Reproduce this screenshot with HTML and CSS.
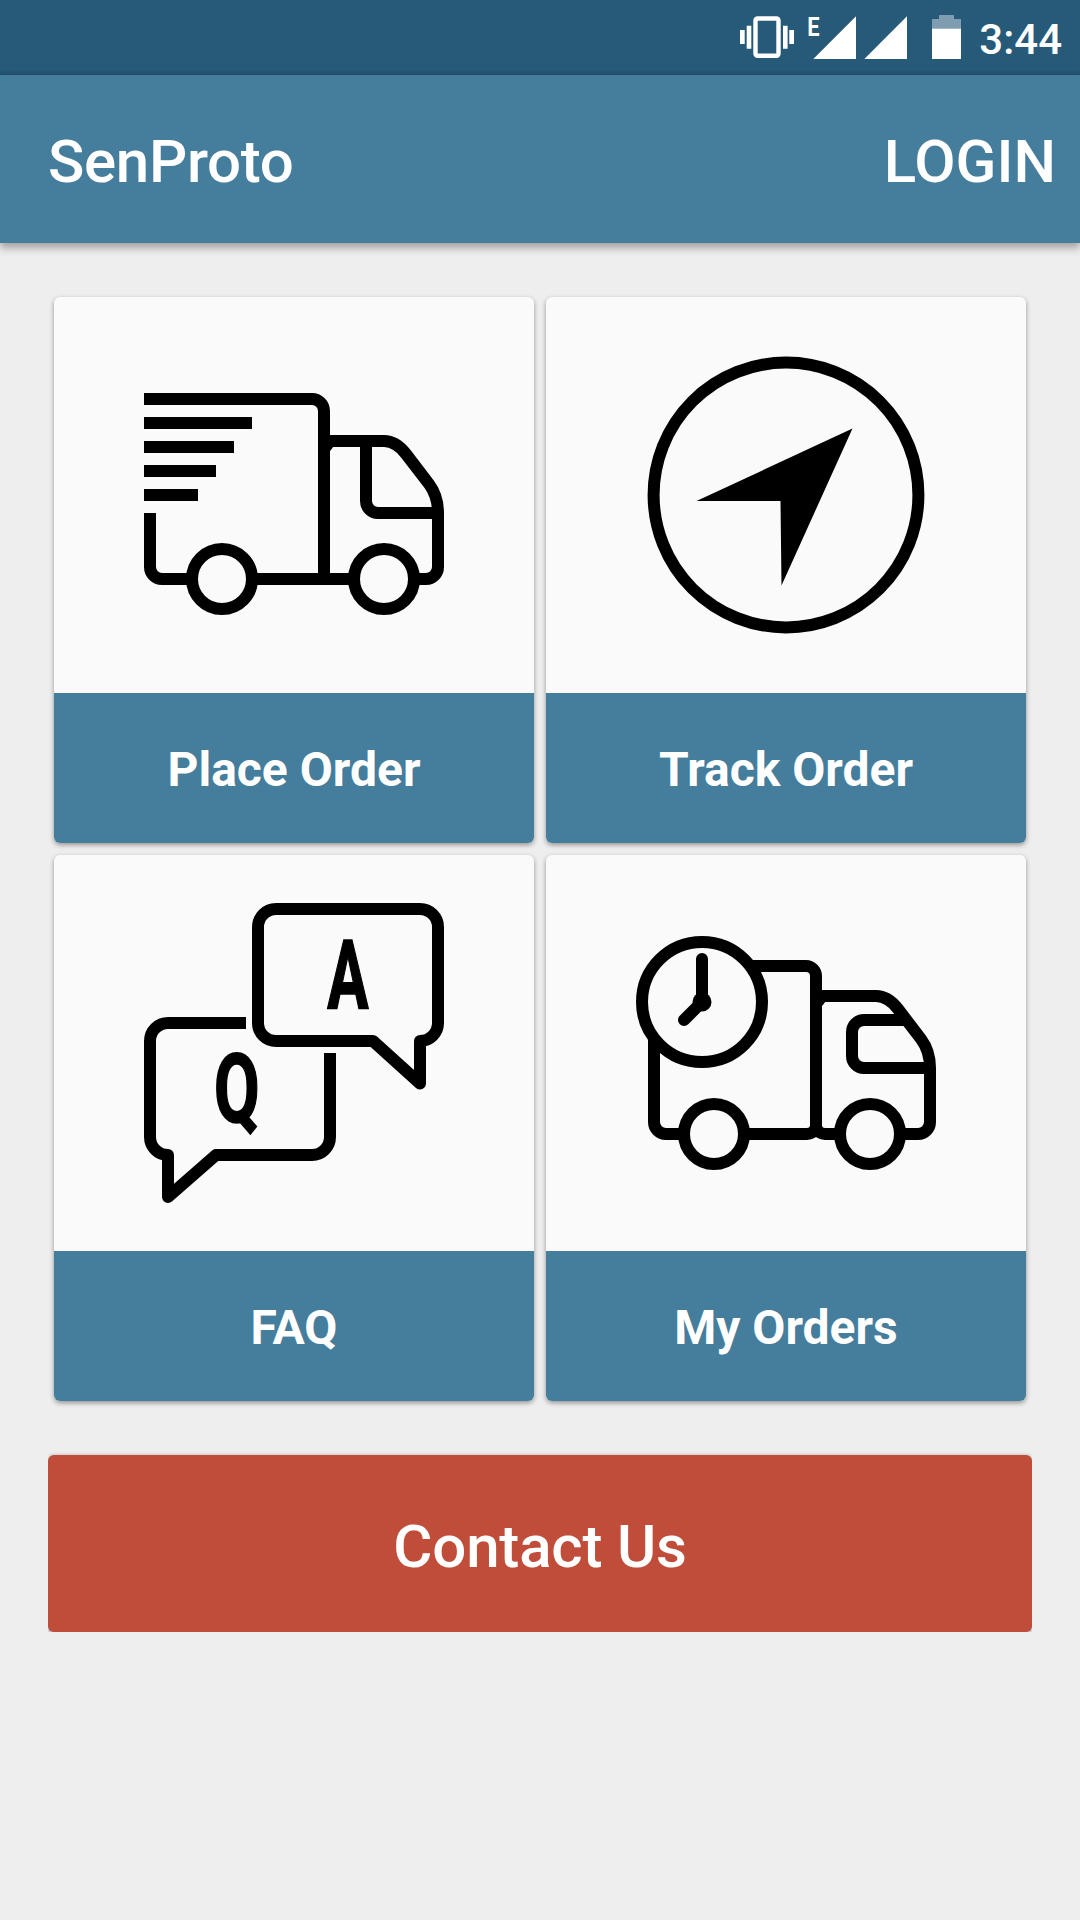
FILE: index.html
```html
<!DOCTYPE html>
<html lang="en">
<head>
<meta charset="utf-8">
<title>SenProto</title>
<link rel="stylesheet" href="styles.css">
</head>
<body>
<div class="status-bar">
  <svg class="status-icons" width="222" height="75" viewBox="740 0 222 75" aria-hidden="true">
    <rect x="755.5" y="18.5" width="23" height="37.3" rx="2" fill="none" stroke="#fff" stroke-width="4.4"/>
    <path fill="#fff" d="M746.7 25.7h4.6v23h-4.6zM740 30h4.7v14H740zM783 25.7h4.6v23H783zM789.3 30h4.7v14h-4.7z"/>
    <text class="network" transform="translate(807.300 35.700) scale(.84 1)">E</text>
    <path fill="#fff" d="M813.3 59H856V16.3zM864.3 59H907V16.3z"/>
    <path fill="#7f9db1" d="M939 15h15v4h7v10h-29V19h7z"/>
    <path fill="#fff" d="M932 28.7h29V59h-29z"/>
  </svg>
  <span class="clock">3:44</span>
</div>
<header class="toolbar">
  <h1 class="title">SenProto</h1>
  <a class="login">LOGIN</a>
</header>
<main class="content">
  <div class="grid">
    <section class="card">
      <div class="picture">
        <svg class="icon" viewBox="0 0 300 300">
          <path d="M0 54H168A12 12 0 0 1 180 66V234M0 78H108M0 102H90M0 126H72M0 150H54M6 168V222A12 12 0 0 0 18 234H48M108 234H210M270 234H282A12 12 0 0 0 294 222V168C294 156 291 147 285 139L262 109Q252 96 240 96H180M222 96V156A12 12 0 0 0 234 168H294"/>
          <path class="solid" d="M186 101H190L186 106z"/>
          <circle cx="78" cy="234" r="30"/><circle cx="240" cy="234" r="30"/>
        </svg>
      </div>
      <h2 class="label">Place Order</h2>
    </section>
    <section class="card">
      <div class="picture">
        <svg class="icon" viewBox="0 0 300 300">
          <circle cx="150" cy="150" r="132.4"/>
          <path class="solid" d="M216.5 83.5L60.5 156H144.5L145.5 240.5z"/>
        </svg>
      </div>
      <h2 class="label">Track Order</h2>
    </section>
    <section class="card">
      <div class="picture">
        <svg class="icon" viewBox="0 0 300 300">
          <path class="joined" d="M132 6H276A18 18 0 0 1 294 24V120A18 18 0 0 1 276 138V180.500L229 138H132A18 18 0 0 1 114 120V24A18 18 0 0 1 132 6zM102 120H24A18 18 0 0 0 6 138V234A18 18 0 0 0 24 252V294L72 252H168A18 18 0 0 0 186 234V150"/>
          <text class="letter" transform="translate(204 104.700) scale(.64 1)">A</text>
          <text class="letter" transform="translate(92.800 219) scale(.69 1)">Q</text>
        </svg>
      </div>
      <h2 class="label">FAQ</h2>
    </section>
    <section class="card">
      <div class="picture">
        <svg class="icon" viewBox="0 0 300 300">
          <circle cx="66" cy="99" r="60"/>
          <path d="M115 63H170A10 10 0 0 1 180 73V222A9 9 0 0 1 171 231H108M18 135V219A12 12 0 0 0 30 231H48M180 222A9 9 0 0 0 189 231H204M264 231H282A12 12 0 0 0 294 219V165C294 153 291 144 285 136L262 106Q252 93 240 93H180M268 117H228A12 12 0 0 0 216 129V153A12 12 0 0 0 228 165H294"/>
          <path class="solid" d="M186 98H190L186 103z"/>
          <path class="hands" d="M66 56V99L48 117"/>
          <circle class="solid" cx="66" cy="99" r="9.500"/>
          <circle cx="78" cy="231" r="30"/><circle cx="234" cy="231" r="30"/>
        </svg>
      </div>
      <h2 class="label">My Orders</h2>
    </section>
  </div>
  <button class="contact">Contact Us</button>
</main>
</body>
</html>
```
FILE: styles.css
```css
* { box-sizing: border-box; }

body {
  margin: 0;
  min-height: 1920px;
  background: #eee;
  color: #fff;
  font-family: Roboto, sans-serif;
}

.status-bar {
  display: flex;
  justify-content: flex-end;
  height: 75px;
  padding-right: 18px;
  background: linear-gradient(#275a79 70px, #234e69 75px);
}

.status-icons { margin-right: 17px; }

.network {
  fill: #fff;
  font-size: 26px;
  font-weight: 700;
}

.clock {
  padding-top: 2px;
  font-size: 42px;
  font-weight: 500;
  line-height: 75px;
}

.toolbar {
  display: flex;
  align-items: center;
  justify-content: space-between;
  height: 168px;
  padding: 5px 24px 0 48px;
  background: #457d9c;
  box-shadow: 0 5px 8px rgba(0, 0, 0, .32);
  font-size: 60px;
}

.title,
.login {
  margin: 0;
  font-size: inherit;
  font-weight: 500;
}

.title { letter-spacing: -.3px; }

.content { padding: 54px 48px 0; }

.grid {
  display: grid;
  grid-template-columns: 480px 480px;
  gap: 12px;
  padding: 0 6px;
}

.card {
  border-radius: 6px;
  background: #fafafa;
  box-shadow: 0 2px 5px rgba(0, 0, 0, .38);
}

.picture {
  display: flex;
  align-items: center;
  justify-content: center;
  height: 396px;
}

.icon {
  width: 300px;
  height: 300px;
  fill: none;
  stroke: #000;
  stroke-width: 12;
}

.icon .solid {
  fill: #000;
  stroke: none;
}

.icon .joined { stroke-linejoin: round; }

.icon .hands {
  stroke-linecap: round;
  stroke-linejoin: round;
}

.icon .letter {
  fill: #000;
  stroke-width: 1.6;
  font-size: 96px;
  font-weight: 700;
  text-anchor: middle;
}

.label {
  height: 150px;
  margin: 0;
  padding-top: 2px;
  border-radius: 0 0 6px 6px;
  background: #457d9c;
  font-size: 48px;
  font-weight: 700;
  line-height: 150px;
  text-align: center;
}

.contact {
  display: block;
  width: 100%;
  height: 177px;
  margin-top: 54px;
  padding: 5px 0 0;
  border: 0;
  border-radius: 6px;
  background: #c04d3a;
  box-shadow: 0 1px 4px rgba(0, 0, 0, .4);
  clip-path: inset(-4px 0 0);
  color: #fff;
  font: 500 60px Roboto, sans-serif;
  letter-spacing: -.2px;
}
```
